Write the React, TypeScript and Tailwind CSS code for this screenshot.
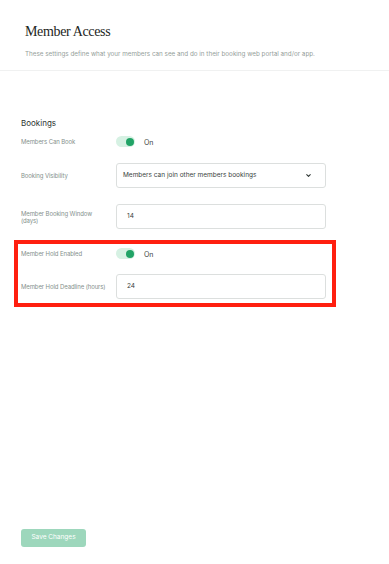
import { ChevronDown } from 'lucide-react'

const sans = { fontFamily: 'Inter, "Noto Sans", sans-serif' }

function Toggle({ on }: { on: boolean }) {
  return (
    <div className="flex items-center gap-[9px]">
      <div className="relative w-[19px] h-[11px] rounded-full bg-[#d6f1e3]">
        <div className="absolute right-[1px] top-[1.5px] w-[8px] h-[8px] rounded-full bg-[#21a366]" />
      </div>
      <span className="text-[7px] leading-[11px] pt-[2px] text-[#3a4340]">{on ? 'On' : 'Off'}</span>
    </div>
  )
}

function Row({ label, children, className = '' }: { label: React.ReactNode; children: React.ReactNode; className?: string }) {
  return (
    <div className={`flex items-center ${className}`}>
      <div className="w-[95px] shrink-0 whitespace-nowrap text-[6px] leading-[7px] tracking-[-0.1px] text-[#85918d]">{label}</div>
      <div className="flex-1">{children}</div>
    </div>
  )
}

function Field({ value, select }: { value: string; select?: boolean }) {
  return (
    <div className="h-[25px] w-[210px] rounded-[3px] border border-[#dcdfde] bg-white flex items-center justify-between pl-[6px] pr-[13px]">
      <span className={`text-[6.5px] text-[#3a4340] ${select ? '' : 'pl-[4px]'}`}>{value}</span>
      {select && <ChevronDown className="w-[7px] h-[7px] text-[#2b3330]" strokeWidth={3.5} />}
    </div>
  )
}

export default function App() {
  return (
    <div className="h-[564px] w-[389px] bg-white flex flex-col" style={sans}>
      <div className="pl-[25px] pt-[24px] h-[71px] border-b border-[#f0f1f1]">
        <h1 className="text-[14px] leading-[16px] tracking-[-0.35px] text-[#1d2623]" style={{ fontFamily: '"Liberation Serif", serif' }}>
          Member Access
        </h1>
        <p className="mt-[10px] text-[6.3px] text-[#959e9a]">
          These settings define what your members can see and do in their booking web portal and/or app.
        </p>
      </div>

      <div className="pl-[21px] pt-[46px]">
        <h2 className="text-[8px] leading-[12px] text-[#2b3330]">Bookings</h2>

        <div className="mt-[7px] flex flex-col gap-[16px] w-[305px]">
          <Row label="Members Can Book" className="h-[11px]">
            <Toggle on />
          </Row>
          <Row label="Booking Visibility">
            <Field value="Members can join other members bookings" select />
          </Row>
          <Row label={<>Member Booking Window<br />(days)</>}>
            <Field value="14" />
          </Row>
        </div>

        <div className="mt-[11px] ml-[-7px] w-[322px] border-4 border-[#ff1f10] pl-[3px] py-[4px] flex flex-col gap-[15px]">
          <Row label="Member Hold Enabled" className="h-[11px]">
            <Toggle on />
          </Row>
          <Row label="Member Hold Deadline (hours)">
            <Field value="24" />
          </Row>
        </div>
      </div>

      <div className="mt-auto pl-[21px] pb-[17px]">
        <button className="w-[65px] h-[18px] rounded-[3px] bg-[#9dd7bc] text-white text-[6.5px]">
          Save Changes
        </button>
      </div>
    </div>
  )
}
